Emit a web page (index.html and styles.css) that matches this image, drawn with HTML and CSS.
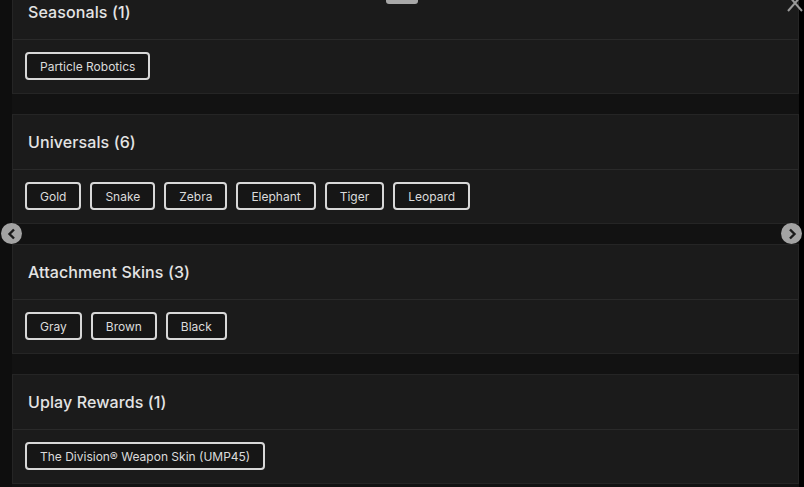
FILE: index.html
```html
<!DOCTYPE html>
<html lang="en">
<head>
    <meta charset="UTF-8">
    <meta name="viewport" content="width=device-width, initial-scale=1.0">
    <title>Weapon Skins</title>
    <link rel="stylesheet" href="styles.css">
</head>
<body>

    <div class="modal">
        <!-- drag handle + close -->
        <span class="modal-handle"></span>
        <button class="modal-close" aria-label="Close">
            <svg width="16" height="12" viewBox="0 0 16 12"><path d="M1 11 L8 3 L15 11 M8 3 L1 -5 M8 3 L15 -5" fill="none" stroke="#9a9a9a" stroke-width="2"/></svg>
        </button>

        <!-- carousel arrows -->
        <button class="nav-arrow nav-prev" aria-label="Previous">
            <svg width="10" height="12" viewBox="0 0 10 12"><path d="M7 1.5 L2.5 6 L7 10.5" fill="none" stroke="#1a1a1a" stroke-width="2.4"/></svg>
        </button>
        <button class="nav-arrow nav-next" aria-label="Next">
            <svg width="10" height="12" viewBox="0 0 10 12"><path d="M3 1.5 L7.5 6 L3 10.5" fill="none" stroke="#1a1a1a" stroke-width="2.4"/></svg>
        </button>

        <div class="skin-groups">
            <section class="skin-group">
                <h3 class="group-title">Seasonals (1)</h3>
                <div class="tag-list">
                    <span class="tag">Particle Robotics</span>
                </div>
            </section>

            <section class="skin-group">
                <h3 class="group-title">Universals (6)</h3>
                <div class="tag-list">
                    <span class="tag">Gold</span>
                    <span class="tag">Snake</span>
                    <span class="tag">Zebra</span>
                    <span class="tag">Elephant</span>
                    <span class="tag">Tiger</span>
                    <span class="tag">Leopard</span>
                </div>
            </section>

            <section class="skin-group">
                <h3 class="group-title">Attachment Skins (3)</h3>
                <div class="tag-list">
                    <span class="tag">Gray</span>
                    <span class="tag">Brown</span>
                    <span class="tag">Black</span>
                </div>
            </section>

            <section class="skin-group">
                <h3 class="group-title">Uplay Rewards (1)</h3>
                <div class="tag-list">
                    <span class="tag">The Division® Weapon Skin (UMP45)</span>
                </div>
            </section>
        </div>
    </div>

</body>
</html>
```

FILE: styles.css
```css
/* --- base --- */
:root {
    --page-bg: #0e0e0e;
    --gap-bg: #121212;
    --card-bg: #1b1b1b;
    --card-border: #252525;
    --divider: #2a2a2a;
    --text: #e4e4e4;
    --tag-border: #d8d8d8;
}

html, body {
    margin: 0;
    height: 100%;
    overflow: hidden;
}

body {
    background-color: #000;
    font-family: Inter, "Open Sans", "Liberation Sans", sans-serif;
    color: var(--text);
}

/* --- modal shell --- */
.modal {
    position: relative;
    display: flow-root; /* keep the list's negative margin inside */
    height: 100%;
    margin-right: 5px;
    background-color: var(--page-bg);
}

.modal-handle {
    position: absolute;
    top: 0;
    left: 386px;
    width: 32px;
    height: 4px;
    background-color: #a8a8a8;
    border-radius: 0 0 3px 3px;
    z-index: 2;
}

.modal-close {
    position: absolute;
    top: 0;
    right: -4px;
    padding: 0;
    border: 0;
    background: none;
    line-height: 0;
    z-index: 2;
}

/* --- carousel arrows --- */
.nav-arrow {
    position: absolute;
    top: 223px;
    width: 21px;
    height: 21px;
    padding: 0;
    border: 0;
    border-radius: 50%;
    background-color: #a3a3a3;
    display: flex;
    align-items: center;
    justify-content: center;
    z-index: 2;
}

.nav-prev { left: 1px; }
.nav-next { right: -3px; }

/* --- skin groups --- */
.skin-groups {
    display: flex;
    flex-direction: column;
    gap: 20px;
    height: calc(100% + 16px);
    margin: -16px 0 0 12px;
    background-color: var(--gap-bg);
    overflow: hidden;
}

.skin-group {
    flex-shrink: 0;
    background-color: var(--card-bg);
    border: 1px solid var(--card-border);
}

.group-title {
    margin: 0;
    height: 54px;
    padding: 0 15px;
    display: flex;
    align-items: center;
    font-size: 16px;
    font-weight: 500;
    letter-spacing: 0.1px;
    border-bottom: 1px solid var(--divider);
}

.tag-list {
    display: flex;
    flex-wrap: wrap;
    gap: 9px;
    padding: 12px 12px 13px;
}

.tag {
    display: inline-flex;
    align-items: center;
    height: 28px;
    box-sizing: border-box;
    padding: 0 13px;
    border: 2px solid var(--tag-border);
    border-radius: 4px;
    background-color: #161616;
    font-size: 12px;
    color: #dcdcdc;
}
```
